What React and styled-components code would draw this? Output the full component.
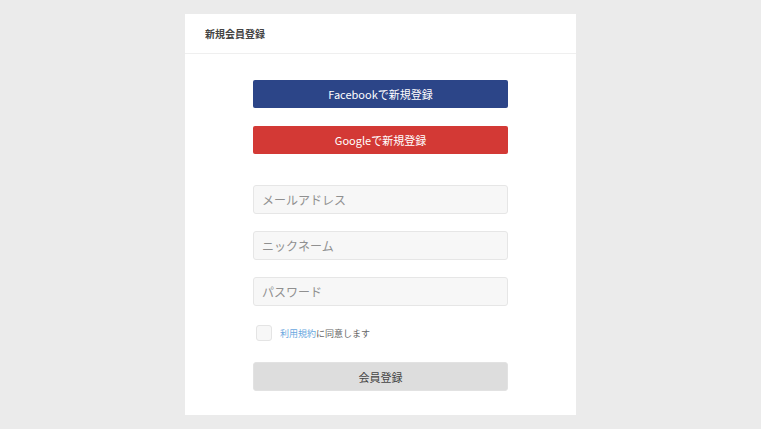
import { useState } from "react"
import styled, { createGlobalStyle } from "styled-components"

const GlobalStyle = createGlobalStyle`
  html, body {
    margin: 0;
    padding: 0;
    background: #ebebeb;
    font-family: "Noto Sans CJK JP", "Noto Sans", sans-serif;
  }
`

const App = () => {
  const [agreed, setAgreed] = useState(false)

  return (
    <>
      <GlobalStyle />
      <Page>
        <Card>
          <Header>新規会員登録</Header>
          <Body>
            <SocialGroup>
              <SocialButton $bg="#2c4588">Facebookで新規登録</SocialButton>
              <SocialButton $bg="#d33935">Googleで新規登録</SocialButton>
            </SocialGroup>
            <Form>
              <Input type="email" placeholder="メールアドレス" />
              <Input type="text" placeholder="ニックネーム" />
              <Input type="password" placeholder="パスワード" />
              <Agree>
                <Check $checked={agreed} onClick={() => setAgreed(!agreed)} />
                <span><TermsLink href="#">利用規約</TermsLink>に同意します</span>
              </Agree>
              <Submit disabled={!agreed}>会員登録</Submit>
            </Form>
          </Body>
        </Card>
      </Page>
    </>
  )
}

const Page = styled.div`
  display: flex;
  justify-content: center;
  padding-top: 14px;
`

const Card = styled.div`
  width: 391px;
  background: #fff;
`

const Header = styled.div`
  height: 39px;
  display: flex;
  align-items: center;
  padding-left: 20px;
  border-bottom: 1px solid #efefef;
  font-size: 10px;
  font-weight: 700;
  color: #444;
`

const Body = styled.div`
  display: flex;
  flex-direction: column;
  align-items: center;
  padding: 26px 0 24px;
`

const SocialGroup = styled.div`
  display: flex;
  flex-direction: column;
  gap: 18px;
  width: 255px;
`

const SocialButton = styled.button`
  height: 28px;
  border: none;
  border-radius: 2px;
  background: ${(p) => p.$bg};
  color: #fff;
  font-family: inherit;
  font-size: 11px;
  cursor: pointer;
`

const Form = styled.div`
  display: flex;
  flex-direction: column;
  width: 255px;
  margin-top: 31px;
  gap: 17px;
`

const Input = styled.input`
  box-sizing: border-box;
  height: 29px;
  padding: 0 8px;
  border: 1px solid #e6e6e6;
  border-radius: 3px;
  background: #f7f7f7;
  font-family: inherit;
  font-size: 12px;
  color: #333;
  outline: none;
  &::placeholder {
    color: #909090;
  }
`

const Agree = styled.label`
  display: flex;
  align-items: center;
  gap: 8px;
  padding-left: 3px;
  margin-top: 2px;
  font-size: 9px;
  color: #666;
`

const Check = styled.span`
  box-sizing: border-box;
  width: 16px;
  height: 16px;
  border: 1px solid #e4e4e4;
  border-radius: 3px;
  background: ${(p) => (p.$checked ? "#5a9fdc" : "#f7f7f7")};
  cursor: pointer;
`

const TermsLink = styled.a`
  color: #6aa8e0;
  text-decoration: none;
`

const Submit = styled.button`
  height: 29px;
  margin-top: 4px;
  border: 1px solid #e2e2e2;
  border-radius: 3px;
  background: #dddddd;
  color: #444;
  font-family: inherit;
  font-size: 11px;
`

export default App
